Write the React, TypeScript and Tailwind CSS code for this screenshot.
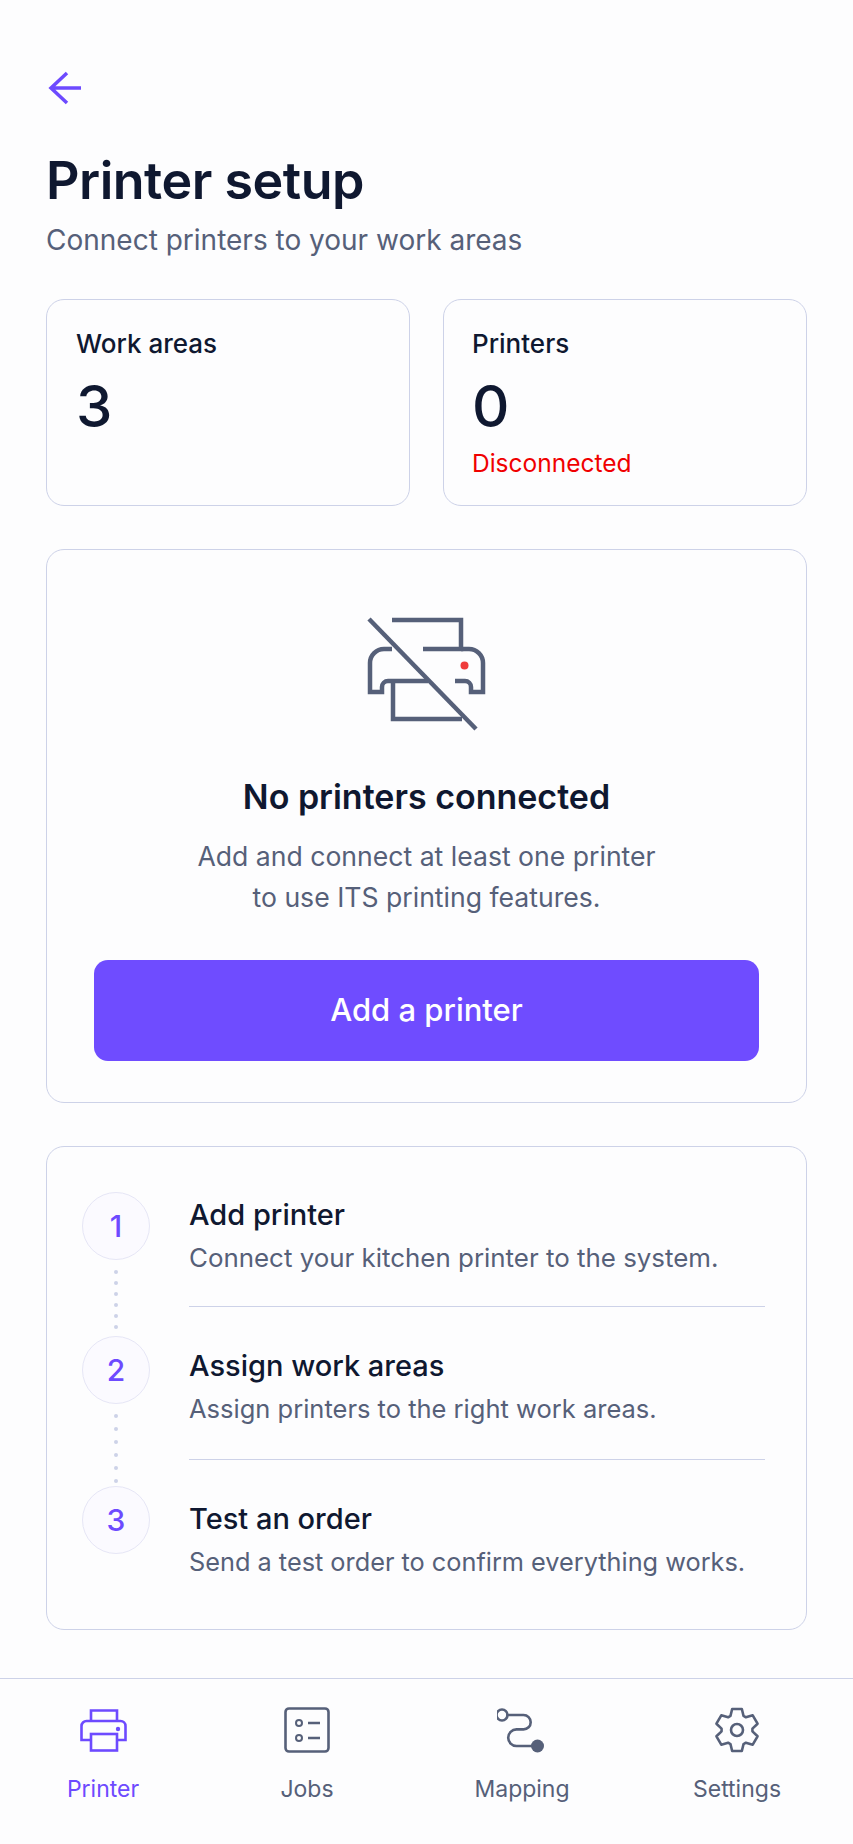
const font = { fontFamily: "Inter, 'Noto Sans', sans-serif" }

// gear outline with six teeth, one pointing straight up
function gearPath(cx: number, cy: number, outer: number, inner: number) {
  const pts: string[] = []
  for (let i = 0; i < 6; i++) {
    const a = -90 + i * 60
    const list: [number, number][] = [
      [a - 25, inner],
      [a - 13, outer],
      [a + 13, outer],
      [a + 25, inner],
    ]
    for (const [deg, r] of list) {
      const rad = (deg * Math.PI) / 180
      pts.push(`${(cx + r * Math.cos(rad)).toFixed(2)} ${(cy + r * Math.sin(rad)).toFixed(2)}`)
    }
  }
  return "M" + pts.join("L") + "Z"
}

function NoPrinterIcon() {
  return (
    <svg width="133" height="120" viewBox="30 25 133 120" fill="none" stroke="#566079" strokeWidth="4.5">
      <path d="M62 31H131V60H93" />
      <path d="M62 60H54A14 14 0 0 0 40 74V103H52V98A6 6 0 0 1 58 92H98" />
      <path d="M63 92V130H132" />
      <path d="M125 92H135A6 6 0 0 1 141 98V103H153V74A14 14 0 0 0 139 60H131" />
      <path d="M39 30L146 140" />
      <circle cx="134.500" cy="76.500" r="4" fill="#ef3b3b" stroke="none" />
    </svg>
  )
}

function PrinterIcon() {
  return (
    <svg width="47" height="43" viewBox="0 0 47 43" fill="none" stroke="#6d4aff" strokeWidth="2.6">
      <path d="M11 12V1.500H37V12" />
      <path d="M11 31H1.500V17A5 5 0 0 1 6.500 12H40.500A5 5 0 0 1 45.500 17V31H37" />
      <rect x="11" y="25" width="26" height="16.500" />
      <circle cx="38" cy="20" r="2.200" fill="#6d4aff" stroke="none" />
    </svg>
  )
}

function JobsIcon() {
  return (
    <svg width="46" height="46" viewBox="0 0 46 46" fill="none" stroke="#566079" strokeWidth="2.6">
      <rect x="1.500" y="1.500" width="43" height="43" rx="3.500" />
      <circle cx="15" cy="16" r="3" strokeWidth="2" />
      <circle cx="15" cy="31" r="3" strokeWidth="2" />
      <path d="M24 16H36M24 31H36" />
    </svg>
  )
}

function MappingIcon() {
  return (
    <svg width="50" height="46" viewBox="66 47 50 46" fill="none" stroke="#566079" strokeWidth="2.6">
      <circle cx="71" cy="55" r="5.500" />
      <path d="M76.500 55H92.500A7.200 7.200 0 0 1 92.500 69.400H85.500A8.300 8.300 0 0 0 85.500 86H102" strokeLinecap="round" />
      <circle cx="106.500" cy="86" r="6.500" fill="#566079" stroke="none" />
    </svg>
  )
}

function SettingsIcon() {
  return (
    <svg width="46" height="46" viewBox="0 0 46 46" fill="none" stroke="#566079" strokeWidth="2.6" strokeLinejoin="round">
      <path d={gearPath(23, 23, 21.500, 15.500)} />
      <circle cx="23" cy="23" r="6" />
    </svg>
  )
}

const steps = [
  { n: 1, title: "Add printer", desc: "Connect your kitchen printer to the system.", size: "text-[25.900px]" },
  { n: 2, title: "Assign work areas", desc: "Assign printers to the right work areas.", size: "text-[25.500px]" },
  { n: 3, title: "Test an order", desc: "Send a test order to confirm everything works.", size: "text-[25.300px]" },
]

function StepNumber({ n }: { n: number }) {
  return (
    <div className="flex h-[68px] w-[68px] shrink-0 items-center justify-center rounded-full border border-[#e6e6f6] bg-[#fbfaff] text-[30px] font-medium text-[#6d4aff]">
      {n}
    </div>
  )
}

function Dots({ className }: { className: string }) {
  return (
    <div className={"flex flex-col " + className}>
      {[0, 1, 2, 3, 4, 5].map((d) => (
        <span key={d} className="h-[4px] w-[4px] rounded-full bg-[#cdd2e8]" />
      ))}
    </div>
  )
}

export default function App() {
  return (
    <div className="flex h-screen flex-col bg-[#fdfdfe]" style={font}>
      <div className="flex-1 px-[46px] pt-[71px]">
        {/* HEADER */}
        <svg width="36" height="34" viewBox="0 0 36 34" fill="none" stroke="#6d4aff" strokeWidth="3.500" className="ml-[2px]">
          <path d="M19 2L3 17L19 32M3 17H33" />
        </svg>
        <h1 className="mt-[46px] text-[52px] leading-[60px] font-semibold tracking-[-0.5px] text-[#0f1830]">Printer setup</h1>
        <p className="mt-[11px] text-[28px] leading-[36px] text-[#566079]">Connect printers to your work areas</p>

        {/* STATS */}
        <div className="mt-[41px] grid grid-cols-2 gap-[33px]">
          <div className="h-[207px] rounded-[18px] border border-[#cdd2e8] px-[29px] pt-[26px]">
            <div className="text-[26px] leading-[36px] font-medium text-[#0f1830]">Work areas</div>
            <div className="mt-[14px] text-[58px] leading-[60px] font-medium text-[#0f1830]">3</div>
          </div>
          <div className="h-[207px] rounded-[18px] border border-[#cdd2e8] px-[28px] pt-[26px]">
            <div className="text-[26px] leading-[36px] font-medium text-[#0f1830]">Printers</div>
            <div className="mt-[14px] text-[58px] leading-[60px] font-medium text-[#0f1830]">0</div>
            <div className="mt-[10px] text-[24.500px] leading-[34px] text-[#f00000]">Disconnected</div>
          </div>
        </div>

        {/* EMPTY STATE */}
        <div className="mt-[43px] flex h-[554px] flex-col items-center rounded-[18px] border border-[#cdd2e8] px-[47px] pt-[64px]">
          <NoPrinterIcon />
          <h2 className="mt-[41px] text-[34px] leading-[44px] font-semibold text-[#0f1830]">No printers connected</h2>
          <p className="mt-[17px] text-center text-[26.600px] leading-[41px] text-[#566079]">
            Add and connect at least one printer
            <br />
            to use ITS printing features.
          </p>
          <button className="mt-[42px] h-[101px] w-full rounded-[14px] bg-[#6f4cff] text-[31px] font-medium text-white">
            Add a printer
          </button>
        </div>

        {/* STEPS */}
        <div className="mt-[43px] flex h-[484px] rounded-[18px] border border-[#cdd2e8] pt-[45px] pr-[41px] pl-[35px]">
          <div className="flex w-[68px] shrink-0 flex-col items-center">
            <StepNumber n={1} />
            <Dots className="mt-[10px] mb-[7px] gap-[7px]" />
            <StepNumber n={2} />
            <Dots className="mt-[10px] mb-[3px] gap-[9px]" />
            <StepNumber n={3} />
          </div>
          <div className="ml-[39px] flex-1 pt-[3px]">
            {steps.map((s, i) => (
              <div key={s.n}>
                <div className="text-[29px] leading-[40px] font-medium text-[#0f1830]">{s.title}</div>
                <div className={"mt-[3px] leading-[40px] text-[#566079] " + s.size}>{s.desc}</div>
                {i < 2 && <div className={"mb-[39px] h-px bg-[#cdd2e8] " + (i === 0 ? "mt-[28px]" : "mt-[30px]")} />}
              </div>
            ))}
          </div>
        </div>
      </div>

      {/* BOTTOM NAV */}
      <nav className="grid h-[166px] grid-cols-[206px_202px_228px_202px] border-t border-[#cdd2e8] pt-[28px]">
        <NavItem label="Printer" active icon={<PrinterIcon />} />
        <NavItem label="Jobs" icon={<JobsIcon />} />
        <NavItem label="Mapping" icon={<MappingIcon />} />
        <NavItem label="Settings" icon={<SettingsIcon />} />
      </nav>
    </div>
  )
}

function NavItem({ label, icon, active }: { label: string; icon: React.ReactNode; active?: boolean }) {
  return (
    <div className="flex flex-col items-center">
      <div className="flex h-[46px] items-center">{icon}</div>
      <span className={"mt-[21px] text-[23px] leading-[30px] " + (active ? "text-[#6d4aff]" : "text-[#566079]")}>
        {label}
      </span>
    </div>
  )
}
